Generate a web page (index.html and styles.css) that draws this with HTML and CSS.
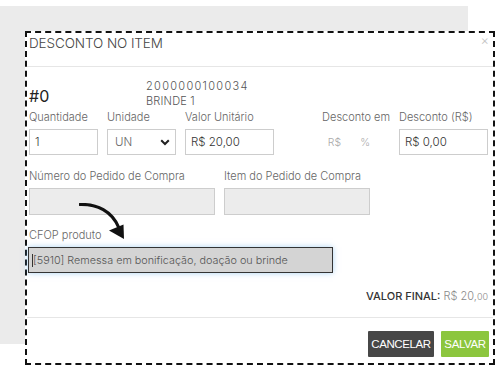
FILE: index.html
```html
<!DOCTYPE html>
<html lang="pt">
<head>
<meta charset="utf-8">
<link rel="stylesheet" href="styles.css">
</head>
<body>
<div class="page">
  <div class="backdrop"></div>
  <div class="modal">
    <div class="modal-header">
      <span class="title">DESCONTO NO ITEM</span>
      <span class="close">×</span>
    </div>
    <div class="modal-body">
      <div class="item-row">
        <span class="item-num">#0</span>
        <div class="item-info">
          <span class="code">2000000100034</span>
          <span class="name">BRINDE 1</span>
        </div>
      </div>
      <div class="fields">
        <div class="field w-qty">
          <label>Quantidade</label>
          <div class="input">1</div>
        </div>
        <div class="field w-un">
          <label>Unidade</label>
          <div class="input select"><span>UN</span>
            <svg class="chev" width="10" height="7" viewBox="0 0 10 7"><path d="M1.2 1.2 L5 5 L8.8 1.2" fill="none" stroke="#222" stroke-width="2"/></svg>
          </div>
        </div>
        <div class="field w-val">
          <label>Valor Unitário</label>
          <div class="input">R$ 20,00</div>
        </div>
        <div class="field w-tipo">
          <label>Desconto em</label>
          <div class="toggle"><span>R$</span><span>%</span></div>
        </div>
        <div class="field w-desc">
          <label>Desconto (R$)</label>
          <div class="input">R$ 0,00</div>
        </div>
      </div>
      <div class="fields row2">
        <div class="field w-ped">
          <label>Número do Pedido de Compra</label>
          <div class="input disabled"></div>
        </div>
        <div class="field w-item">
          <label>Item do Pedido de Compra</label>
          <div class="input disabled"></div>
        </div>
      </div>
      <div class="field cfop">
        <label>CFOP produto</label>
        <div class="input focused"><span class="caret"></span>[5910] Remessa em bonificação, doação ou brinde</div>
      </div>
      <div class="total"><b>VALOR FINAL:</b> R$ 20,<small>00</small></div>
    </div>
    <div class="modal-footer">
      <button class="btn cancel">CANCELAR</button>
      <button class="btn save">SALVAR</button>
    </div>
    <svg class="arrow" width="60" height="50" viewBox="0 0 60 50">
      <path d="M1 1.5 C 18 1, 33 8, 40 25" fill="none" stroke="#111" stroke-width="3.2" stroke-linecap="round"/>
      <path d="M30 27.5 L45 36 L44.5 21.5 Z" fill="#111"/>
    </svg>
  </div>
</div>
</body>
</html>
```
FILE: styles.css
```css
* { box-sizing: border-box; }
html, body { margin: 0; padding: 0; background: #fff; }
body { font-family: Inter, "Noto Sans", sans-serif; color: #555; }
.page { position: relative; width: 501px; height: 373px; padding-top: 6px; }
.backdrop { width: 468px; height: 338px; background: #ebebeb; }
.modal {
  position: absolute; left: 25px; top: 31px; width: 470px; height: 334px;
  background: #fff; border: 2px dashed #111;
  display: flex; flex-direction: column;
}
.modal-header {
  height: 34px; flex-shrink: 0; border-bottom: 1px solid #e6e6e6;
  display: flex; justify-content: space-between; align-items: flex-start;
  padding: 2px 4px 0 2px;
}
.title { font-size: 13.5px; font-weight: 300; color: #444; letter-spacing: -0.1px; }
.close { color: #c4c4c4; font-size: 13px; font-weight: 300; margin-top: -3px; }
.modal-body { padding: 0 4px 0 2px; flex: 1; }
.item-row { display: flex; align-items: flex-end; height: 44px; padding-bottom: 2px; }
.item-num { font-size: 16px; color: #222; font-weight: 400; width: 117px; line-height: 16px; margin-bottom: 5px; }
.item-info { display: flex; flex-direction: column; font-size: 11px; color: #555; font-weight: 300; line-height: 15px; }
.code { letter-spacing: 1.3px; }
.name { letter-spacing: 0.2px; }
.fields { display: flex; gap: 9px; }
.field { display: flex; flex-direction: column; flex-shrink: 0; }
.field label { font-size: 11px; color: #666; font-weight: 300; line-height: 13px; height: 18px; }
.input {
  height: 26px; border: 1px solid #cdcdcd; background: #fff;
  font-size: 11.5px; color: #333; font-weight: 300;
  display: flex; align-items: center; padding: 0 5px;
}
.w-qty { width: 69px; }
.w-un { width: 69px; }
.w-val { width: 89px; }
.w-tipo { width: 107px; align-items: flex-end; }
.w-desc { width: 89px; }
.select { justify-content: space-between; padding: 0 5px 0 7px; color: #666; }
.toggle { height: 26px; display: flex; align-items: center; gap: 19px; font-size: 10.5px; color: #aaa; font-weight: 300; padding-right: 20px; }
.row2 { margin-top: 15px; }
.row2 .input { height: 27px; }
.disabled { background: #ececec; border-color: #cdcdcd; }
.w-ped { width: 186px; }
.w-item { width: 146px; }
.cfop { margin-top: 14px; }
.focused {
  width: 305px; margin-left: -1px; background: #d4d4d4; border: 1px solid #333;
  box-shadow: 0 0 6px rgba(102,175,233,0.55); color: #555; padding-left: 3px; font-size: 10.8px;
}
.caret { width: 1px; height: 13px; background: #333; }
.total { text-align: right; margin-top: 16px; font-size: 11px; color: #888; font-weight: 300; padding-right: 1px; }
.total b { color: #333; font-weight: 500; }
.total small { font-size: 9px; }
.modal-footer {
  height: 40px; flex-shrink: 0; border-top: 1px solid #e6e6e6; margin-bottom: 6px;
  display: flex; justify-content: flex-end; align-items: flex-end; gap: 7px; padding: 0 4px 0 0;
}
.btn { border: 0; height: 26px; color: #fff; font-family: "Liberation Sans", Arial, sans-serif; font-size: 11.5px; padding: 0; letter-spacing: -0.4px; }
.cancel { background: #474747; width: 66px; border-radius: 1px; }
.save { background: #8cc63e; width: 48px; border-radius: 1px; }
.arrow { position: absolute; left: 52px; top: 170px; }
```
